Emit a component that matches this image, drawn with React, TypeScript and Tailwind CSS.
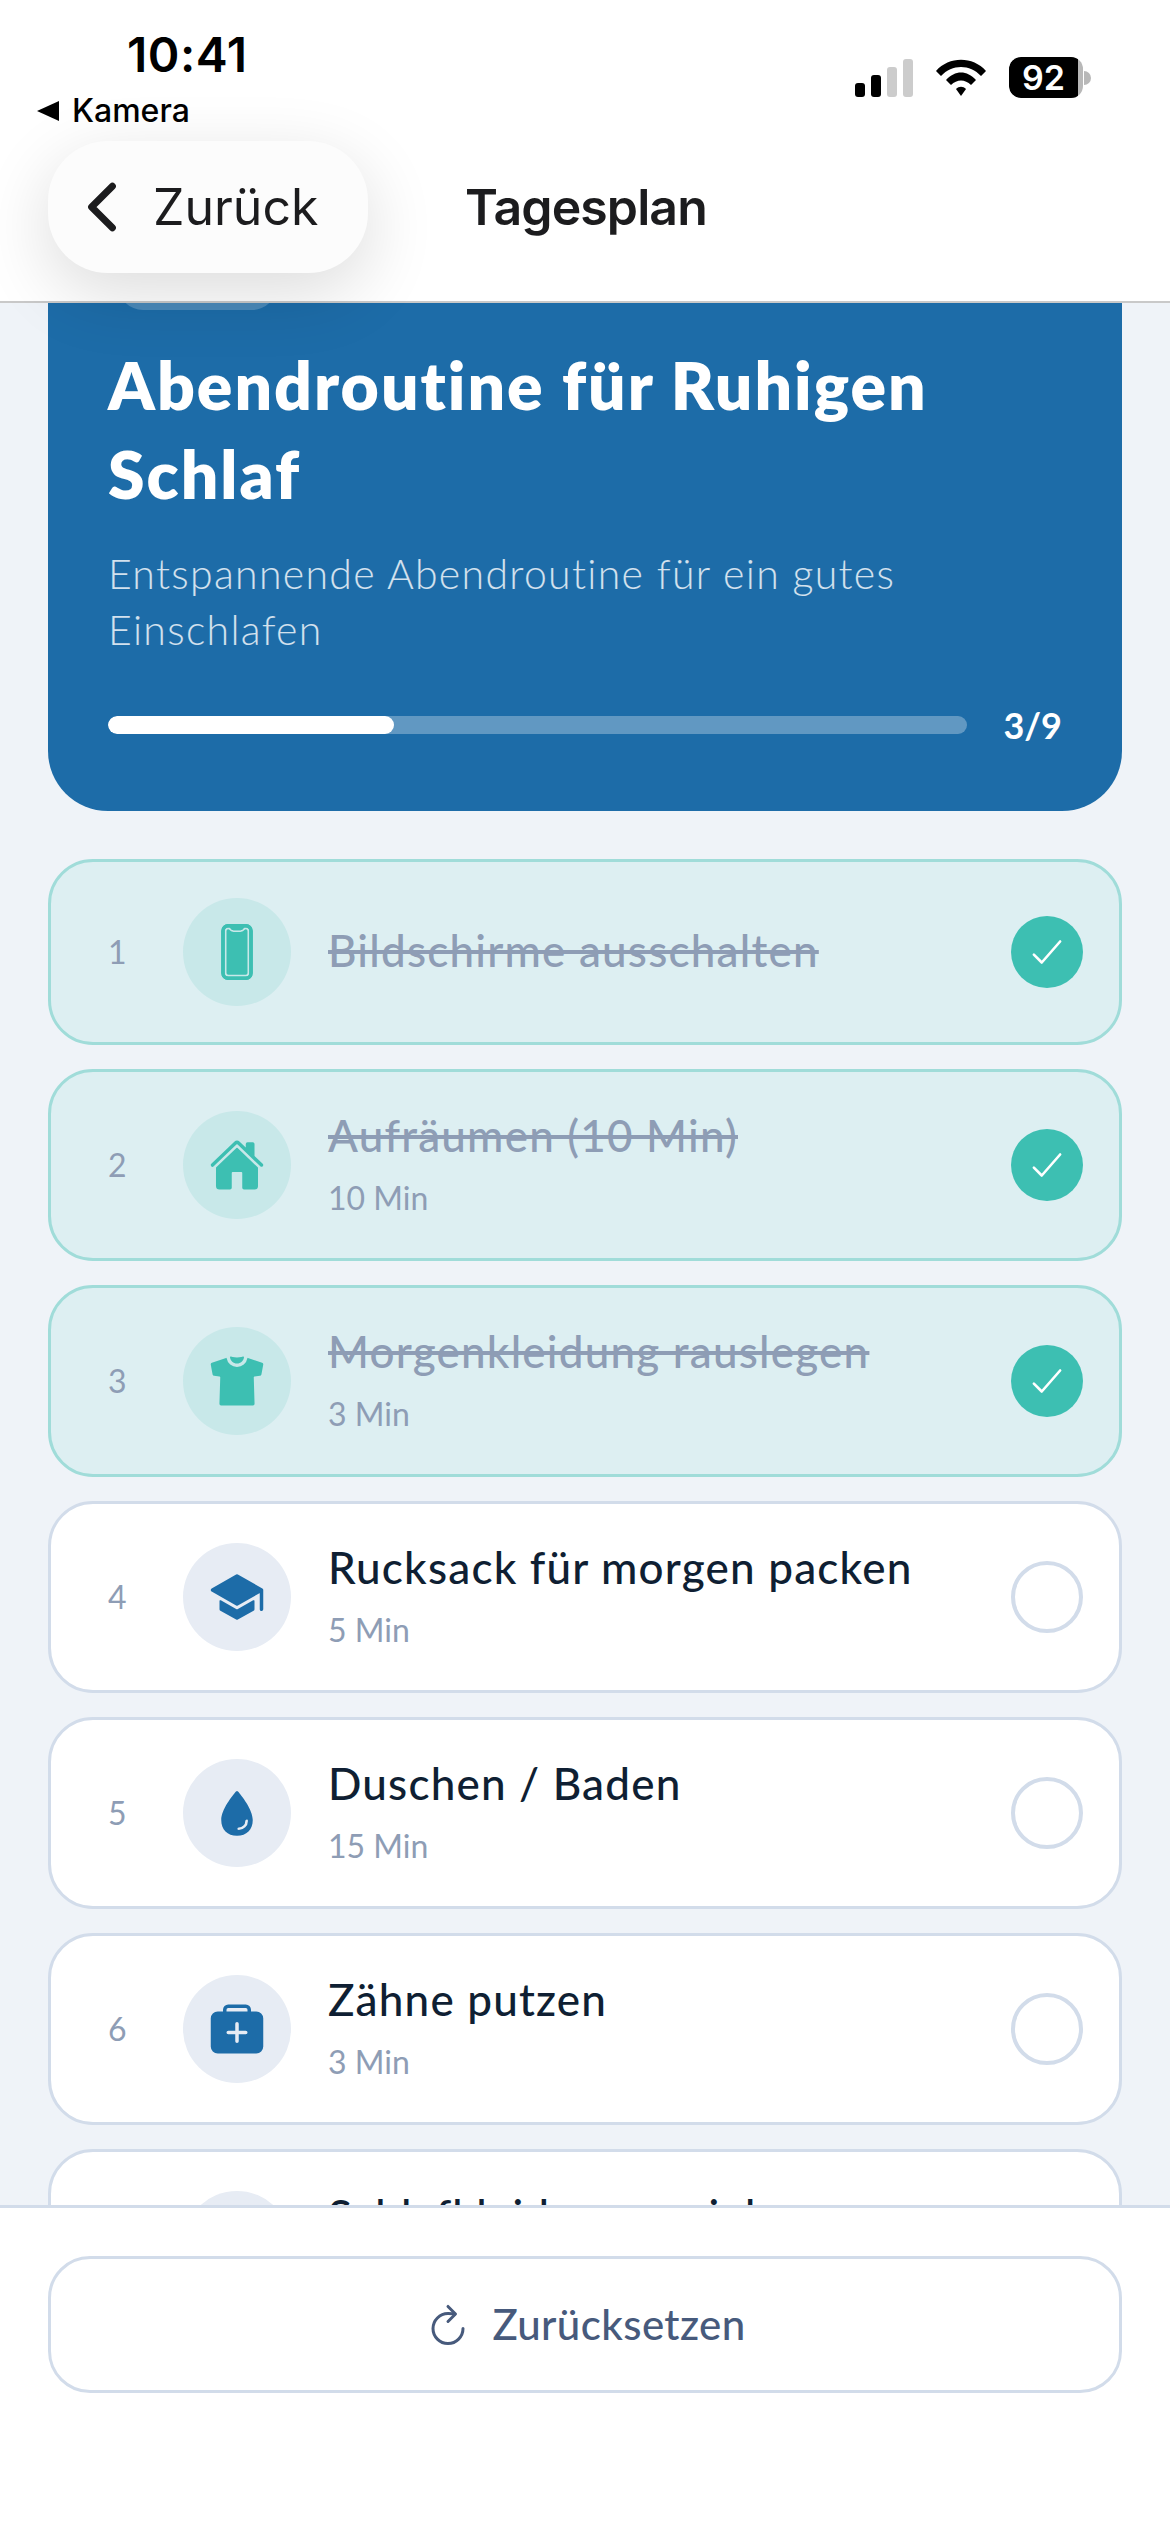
import {
  IoCheckmark,
  IoChevronBack,
  IoHome,
  IoMedkit,
  IoPhonePortrait,
  IoRefreshOutline,
  IoSchool,
  IoShirt,
  IoWater,
} from "react-icons/io5";

const tasks = [
  { n: 1, icon: IoPhonePortrait, title: "Bildschirme ausschalten", done: true },
  { n: 2, icon: IoHome, title: "Aufräumen (10 Min)", time: "10 Min", done: true },
  { n: 3, icon: IoShirt, title: "Morgenkleidung rauslegen", time: "3 Min", done: true },
  { n: 4, icon: IoSchool, title: "Rucksack für morgen packen", time: "5 Min" },
  { n: 5, icon: IoWater, title: "Duschen / Baden", time: "15 Min" },
  { n: 6, icon: IoMedkit, title: "Zähne putzen", time: "3 Min" },
  { n: 7, icon: IoShirt, title: "Schlafkleidung anziehen", time: "2 Min" },
];

type Task = (typeof tasks)[number];

function StatusIcons() {
  return (
    <div className="flex items-center gap-[22px] pt-[57px]">
      <svg width="58" height="38" viewBox="0 0 58 38">
        <rect x="0" y="24" width="10" height="14" rx="3" fill="#000" />
        <rect x="16" y="16" width="10" height="22" rx="3" fill="#000" />
        <rect x="32" y="8" width="10" height="30" rx="3" fill="#ccc" />
        <rect x="48" y="0" width="10" height="38" rx="3" fill="#ccc" />
      </svg>
      <svg width="52" height="38" viewBox="0 0 52 38">
        <path d="M1 12C14-3 38-3 51 12l-5 5C35 5 17 5 6 17z" fill="#000" />
        <path d="M11 21c9-10 21-10 30 0l-5 5c-6-6-14-6-20 0z" fill="#000" />
        <path d="M21 30c3-3 7-3 10 0l-5 7z" fill="#000" />
      </svg>
      <div className="flex items-center">
        <div className="flex h-[41px] w-[74px] items-center overflow-hidden rounded-[12px] bg-[#b8b8b8]">
          <div className="flex h-full w-[69px] items-center justify-center rounded-l-[12px] bg-black font-['Inter',sans-serif] text-[34px] leading-none font-semibold text-white">
            92
          </div>
        </div>
        <div className="ml-px h-[14px] w-[7px] rounded-r-full bg-[#b8b8b8]" />
      </div>
    </div>
  );
}

function TaskRow({ task }: { task: Task }) {
  const Icon = task.icon;
  const done = task.done;
  return (
    <div
      className={`flex items-center rounded-[45px] border-[3px] px-[36px] ${
        task.time ? "h-[192px]" : "h-[186px]"
      } ${done ? "border-[#a0dcd9] bg-[#ddeff2]" : "border-[#d2dcea] bg-white"}`}
    >
      <span className="w-[96px] pl-[21px] text-[32px] text-[#8e9db5]">{task.n}</span>
      <div
        className={`flex h-[108px] w-[108px] shrink-0 items-center justify-center rounded-full ${
          done ? "bg-[#c8e8e9] text-[#3dbfb2]" : "bg-[#e7ecf4] text-[#1d6ca8]"
        }`}
      >
        <Icon size={56} />
      </div>
      <div className={`ml-[37px] flex min-w-0 flex-1 flex-col ${task.time ? "" : "pb-[4px]"}`}>
        <span
          className={`text-[44px] leading-[48px] font-medium tracking-[1.2px] ${
            done ? "text-[#8e9db5] line-through" : "text-[#0f1f33]"
          }`}
        >
          {task.title}
        </span>
        {task.time && (
          <span className="mt-[17px] text-[32px] leading-[44px] text-[#8e9db5]">{task.time}</span>
        )}
      </div>
      {done ? (
        <div className="flex h-[72px] w-[72px] items-center justify-center rounded-full bg-[#3dbfb2] text-white">
          <IoCheckmark size={42} />
        </div>
      ) : (
        <div className="h-[72px] w-[72px] rounded-full border-[4px] border-[#d2dcea]" />
      )}
    </div>
  );
}

export default function App() {
  return (
    <div className="flex h-[2532px] w-[1170px] flex-col overflow-hidden bg-[#eff3f8] font-['Lato',sans-serif]">
      {/* Header */}
      <header className="relative z-10 h-[303px] shrink-0 border-b-2 border-[#c9c9c9] bg-white font-['Inter',sans-serif]">
        <div className="flex h-[141px] items-start justify-between pr-[79px] pl-[37px]">
          <div>
            <div className="ml-[90px] pt-[26px] text-[48px] leading-[58px] font-semibold tracking-[0.5px] text-black">
              10:41
            </div>
            <div className="mt-[14px] flex items-center gap-[13px] text-[32px] leading-[26px] font-medium text-black">
              <span className="h-0 w-0 border-y-[10px] border-r-[22px] border-y-transparent border-r-black" />
              Kamera
            </div>
          </div>
          <StatusIcons />
        </div>
        <div className="flex items-center pl-[48px]">
          <button className="flex h-[132px] w-[320px] items-center gap-[14px] rounded-[60px] bg-[#fcfcfc] pl-[17px] text-[50px] text-[#1c1c1e] shadow-[0_20px_70px_rgba(0,0,0,0.14)]">
            <IoChevronBack size={74} />
            Zurück
          </button>
          <h1 className="ml-[97px] text-[50px] font-semibold tracking-[-0.9px] text-[#1c1c1e]">
            Tagesplan
          </h1>
        </div>
      </header>

      {/* Scrolled content */}
      <main className="min-h-0 flex-1 overflow-hidden px-[48px]">
        <section className="rounded-b-[60px] bg-[#1d6ca8] px-[60px] pb-[59px] text-white">
          <div className="-mt-[43px] ml-[10px] h-[50px] w-[159px] rounded-full bg-white/20" />
          <h2 className="mt-[30px] text-[66px] leading-[89px] font-extrabold tracking-[2px]">
            Abendroutine für Ruhigen Schlaf
          </h2>
          <p className="mt-[28px] text-[41px] leading-[56px] font-light tracking-[1.3px] text-white/80">
            Entspannende Abendroutine für ein gutes Einschlafen
          </p>
          <div className="mt-[40px] flex items-center gap-[36px]">
            <div className="h-[18px] flex-1 overflow-hidden rounded-full bg-white/30">
              <div className="h-full w-1/3 rounded-full bg-white" />
            </div>
            <span className="text-[36px] font-bold">3/9</span>
          </div>
        </section>

        <div className="mt-[48px] flex flex-col gap-[24px]">
          {tasks.map((task) => (
            <TaskRow key={task.n} task={task} />
          ))}
        </div>
      </main>

      {/* Footer */}
      <footer className="h-[327px] shrink-0 border-t-[3px] border-[#d2dcea] bg-white px-[48px] pt-[48px]">
        <button className="flex h-[137px] w-full items-center justify-center gap-[20px] rounded-[42px] border-[3px] border-[#d2dcea] text-[42px] font-medium tracking-[0.4px] text-[#475a7c]">
          <IoRefreshOutline size={48} />
          Zurücksetzen
        </button>
      </footer>
    </div>
  );
}
